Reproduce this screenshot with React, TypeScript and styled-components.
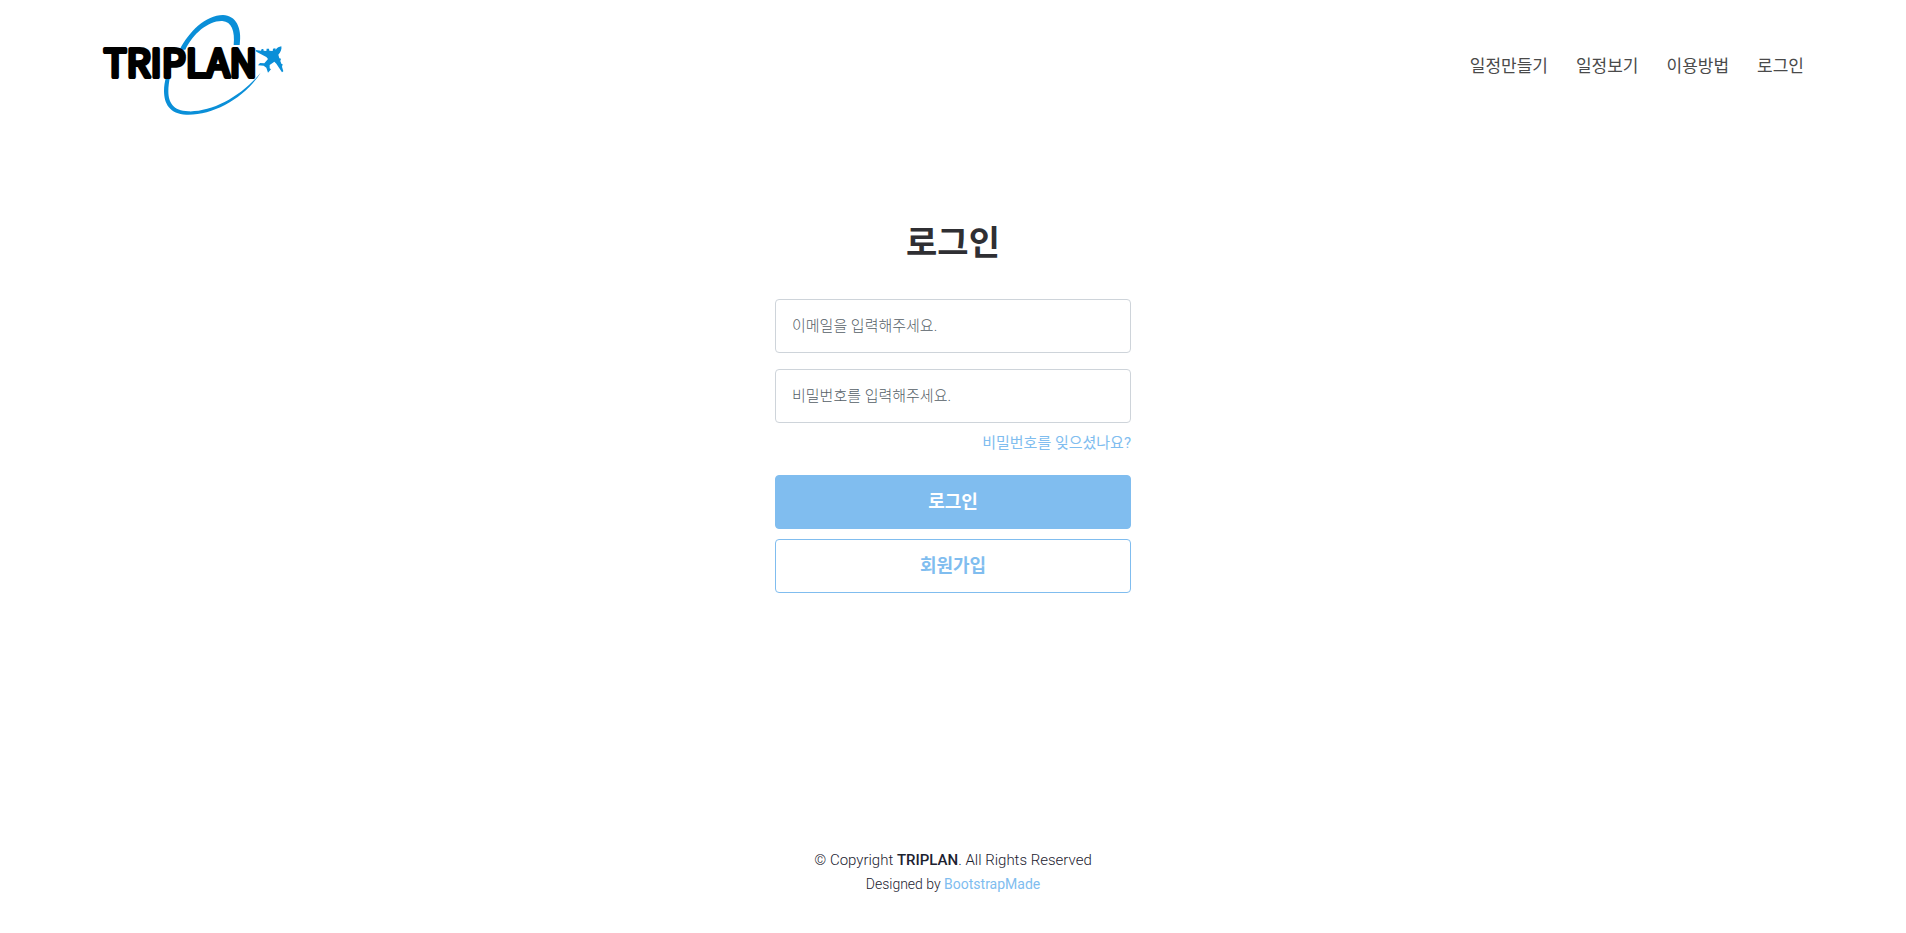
import React from "react";
import styled, { createGlobalStyle } from "styled-components";

const GlobalStyle = createGlobalStyle`
  *, *::before, *::after { box-sizing: border-box; }
  body {
    margin: 0;
    background: #fff;
    color: #1c2230;
    font-family: Roboto, "Noto Sans CJK KR", sans-serif;
    font-size: 15px;
    font-weight: 300;
    line-height: 24px;
  }
  a { color: #80bdef; text-decoration: none; }
`;

const Page = styled.div`
  min-height: 100vh;
  display: flex;
  flex-direction: column;
`;

const Header = styled.header`
  display: flex;
  align-items: center;
  justify-content: space-between;
  padding: 12px 102px;
`;

const LogoLink = styled.a`
  display: block;
  line-height: 0;
`;

const Nav = styled.nav`
  display: flex;
  gap: 28px;
  padding-top: 2px;
`;

const NavLink = styled.a`
  color: #4a4a4a;
  font-size: 17px;
  font-weight: 400;
`;

const Main = styled.main`
  flex: 1;
  display: flex;
  flex-direction: column;
  align-items: center;
  padding-top: 90px;
`;

const Title = styled.h1`
  margin: 0 0 32px;
  color: #2f2f33;
  font-size: 34px;
  font-weight: 700;
  line-height: 48px;
`;

const Form = styled.form`
  width: 100%;
  max-width: 356px;
  display: flex;
  flex-direction: column;
`;

const Field = styled.input`
  height: 54px;
  margin-bottom: 16px;
  padding: 0 16px;
  border: 1px solid #ced4da;
  border-radius: 4px;
  background: #fff;
  font: inherit;
  &::placeholder { color: #555e66; opacity: 1; }
`;

const ForgotLink = styled.a`
  align-self: flex-end;
  margin: -8px 0 20px;
  font-weight: 400;
`;

const Button = styled.button<{ $filled?: boolean }>`
  height: 54px;
  margin-bottom: 10px;
  border: 1px solid #80bdef;
  border-radius: 4px;
  background: ${(p) => (p.$filled ? "#80bdef" : "#fff")};
  color: ${(p) => (p.$filled ? "#fff" : "#80bdef")};
  font: inherit;
  font-size: 18px;
  font-weight: 700;
  cursor: pointer;
`;

const Footer = styled.footer`
  padding: 25px 16px 37px;
  text-align: center;
  p { margin: 0; }
  strong { font-weight: 500; }
`;

const Credits = styled.p`
  font-size: 14px;
  a { font-weight: 400; }
`;

const Wordmark = styled.text`
  font-family: "Noto Sans CJK KR", sans-serif;
  font-size: 114px;
  font-weight: 400;
`;

const Logo = () => (
  <svg width="183" height="105" viewBox="39 21 549 315" role="img" aria-label="TRIPLAN">
    <g fill="#0a8fd8">
      <path d="M272 134C300 80 350 30 402 30C440 31 460 68 452 120L434 120C438 78 428 50 400 48C360 46 312 85 289 134Z" />
      <path d="M231 215C217 270 224 326 292 329C372 332 466 280 515 203C460 272 370 322 298 319C235 316 232 272 243 215Z" />
      <path d="M577 124C579 132 575 142 568 149L571 160L576 161L574 168L577 176L581 178L579 185L583 199L579 202L562 176L556 170L542 180L542 190L546 193L537 203L532 188L524 182L507 181L513 174L526 175L537 162L532 156L502 140L500 135L516 137L518 132L523 132L524 137L532 138L533 131L540 131L541 137L551 138L552 131L559 130L560 134C565 128 570 125 577 124Z" />
    </g>
    <Wordmark x="44" y="217" fill="#000" stroke="#000" strokeWidth="12" strokeLinejoin="round">TRIPLAN</Wordmark>
  </svg>
);

const links = ["일정만들기", "일정보기", "이용방법", "로그인"];

export default function App() {
  return (
    <Page>
      <GlobalStyle />
      <Header>
        <LogoLink href="#"><Logo /></LogoLink>
        <Nav>
          {links.map((label) => (
            <NavLink key={label} href="#">{label}</NavLink>
          ))}
        </Nav>
      </Header>
      <Main>
        <Title>로그인</Title>
        <Form onSubmit={(e) => e.preventDefault()}>
          <Field type="email" aria-label="이메일" placeholder="이메일을 입력해주세요." />
          <Field type="password" aria-label="비밀번호" placeholder="비밀번호를 입력해주세요." />
          <ForgotLink href="#">비밀번호를 잊으셨나요?</ForgotLink>
          <Button type="submit" $filled>로그인</Button>
          <Button type="button">회원가입</Button>
        </Form>
      </Main>
      <Footer>
        <p>© Copyright <strong>TRIPLAN</strong>. All Rights Reserved</p>
        <Credits>Designed by <a href="#">BootstrapMade</a></Credits>
      </Footer>
    </Page>
  );
}
